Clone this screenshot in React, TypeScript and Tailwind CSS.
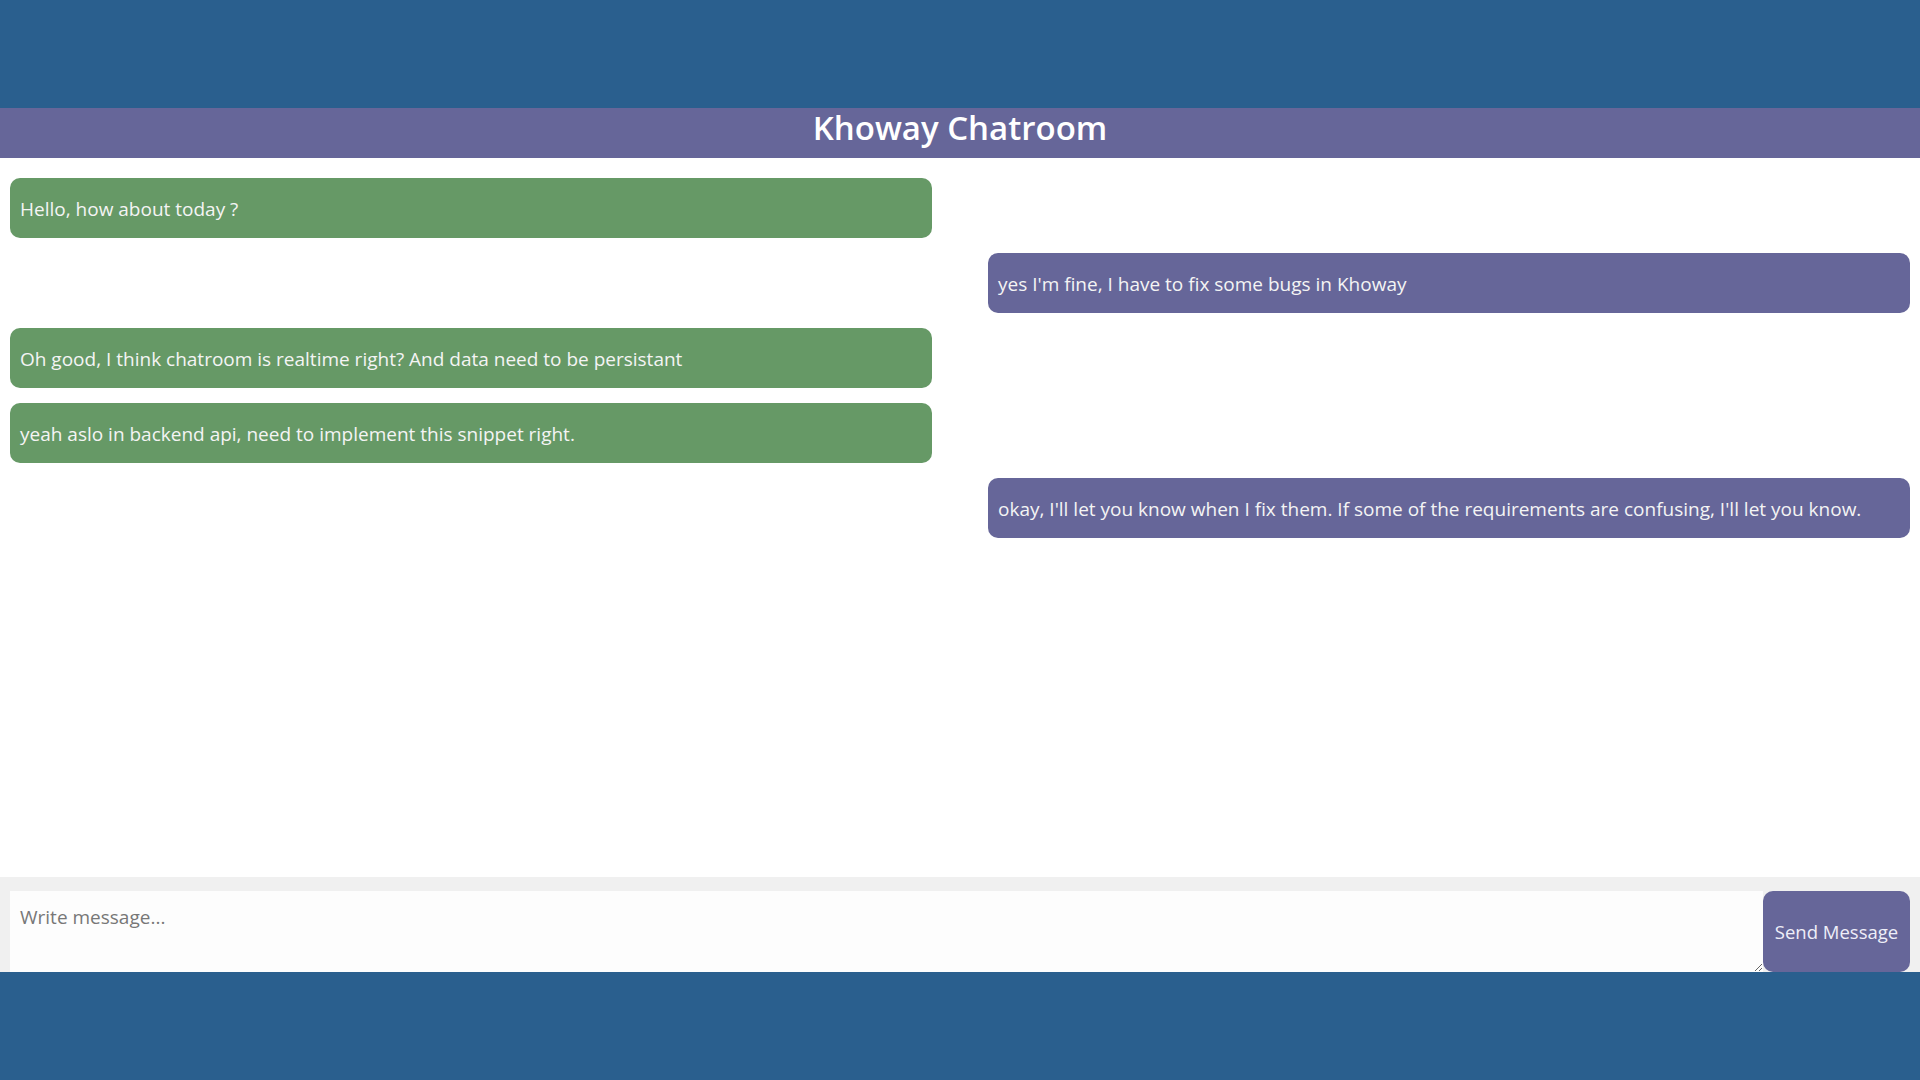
import React from "react";

type Msg = { text: string; mine: boolean };

const messages: Msg[] = [
  { text: "Hello, how about today ?", mine: false },
  { text: "yes I'm fine, I have to fix some bugs in Khoway", mine: true },
  { text: "Oh good, I think chatroom is realtime right? And data need to be persistant", mine: false },
  { text: "yeah aslo in backend api, need to implement this snippet right.", mine: false },
  {
    text: "okay, I'll let you know when I fix them. If some of the requirements are confusing, I'll let you know.",
    mine: true,
  },
];

export default function App() {
  return (
    <div
      className="min-h-screen bg-[#2a5f8e] pt-[108px]"
      style={{ fontFamily: '"Open Sans", "Noto Sans", sans-serif' }}
    >
      <div className="flex h-[864px] flex-col bg-white">
        <header className="flex h-[50px] items-start justify-center bg-[#666699] pt-[3px]">
          <h1 className="text-[33px] font-semibold leading-none text-white">Khoway Chatroom</h1>
        </header>

        <main className="flex flex-1 flex-col gap-[15px] bg-white px-[10px] pt-[20px]">
          {messages.map((m, i) => (
            <div
              key={i}
              className={`flex h-[60px] w-[922px] items-center rounded-[10px] px-[10px] pt-[2px] text-[19px] text-[#f4f4f4] ${
                m.mine ? "self-end bg-[#666699]" : "self-start bg-[#669966]"
              }`}
            >
              {m.text}
            </div>
          ))}
        </main>

        <footer className="flex h-[95px] items-start bg-[#f0f0f0] px-[10px] pt-[14px]">
          <textarea
            placeholder="Write message..."
            className="h-[81px] flex-1 resize-y bg-[#fdfdfd] px-[10px] py-[12px] text-[19px] text-[#333] outline-none placeholder:text-[#777]"
          />
          <button className="h-[81px] w-[147px] rounded-[10px] bg-[#666699] text-[18.5px] text-[#eeeef8]">
            Send Message
          </button>
        </footer>
      </div>
    </div>
  );
}
